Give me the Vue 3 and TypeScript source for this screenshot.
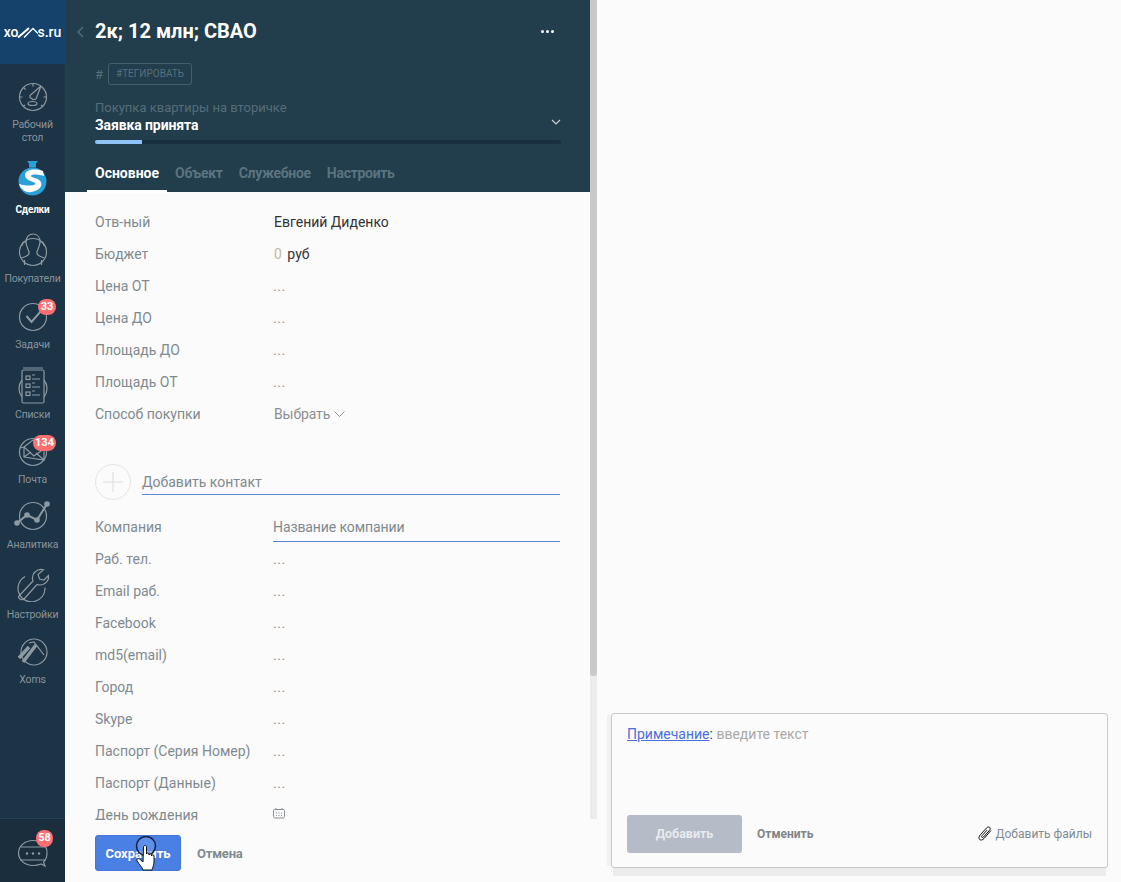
<script setup lang="ts">
const topFields = [
  { label: 'Цена ОТ', value: '...' },
  { label: 'Цена ДО', value: '...' },
  { label: 'Площадь ДО', value: '...' },
  { label: 'Площадь ОТ', value: '...' },
]
const lowerFields = ['Раб. тел.', 'Email раб.', 'Facebook', 'md5(email)', 'Город', 'Skype', 'Паспорт (Серия Номер)', 'Паспорт (Данные)']
const tabs = ['Объект', 'Служебное', 'Настроить']
</script>

<template>
  <div class="app">
    <nav class="nav">
      <div class="logo"><span>xo</span><svg class="logo-m" viewBox="0 0 21 12" width="21" height="12"><path class="m1" d="M1 11.500L12 2"/><path class="m2" d="M7 11.500L16 2.500l5 5"/></svg><span>s.ru</span></div>
      <div class="nav-items">
        <a class="item first">
          <svg viewBox="0 0 30 30" width="30" height="30" class="ico"><circle cx="15" cy="15" r="13.500"/><path d="M15 1.500v3M5.500 5.500l2 2M1.500 15h3M25.500 15h3M5 24.500l2-1.500M25 24.500l-2-1.500"/><path d="M12 13.500L23 4l-5 13-3 .5-3-2z"/><ellipse cx="14.500" cy="21.500" rx="4.500" ry="2"/></svg>
          <span class="lbl">Рабочий<br>стол</span>
        </a>
        <a class="item active">
          <svg viewBox="0 0 29 36" width="29" height="36">
            <path d="M9 0h11l-2 2.500v4h-7v-4z" fill="#2a9fd8"/>
            <circle cx="14" cy="20.500" r="14" fill="#2a9fd8" transform="translate(.5 0)"/>
            <path d="M25 10C16 7 7 9 7 14c0 5 7 6 10 8 2 2-5 4-16 1 2 6 8 9 12 8 7-1 12-5 10-10-2-4-9-4-10-6 0-2 6-2 13 0z" fill="#fff"/>
          </svg>
          <span class="lbl">Сделки</span>
        </a>
        <a class="item buyers">
          <svg viewBox="0 0 30 34" width="30" height="34" class="ico"><circle cx="15" cy="19" r="13.500"/><path d="M8 9c0-5 3-8 7-8s7 3 7 8c0 4-2 7-3 10-.5 2 1 3.500 3.500 4.500l4 1.500M8 9c0 4 2 7 3 10 .5 2-1 3.500-3.500 4.500l-4 1.500"/><path d="M8 9C5 8 4 11 4 13M22 9c3-1 4 2 4 4"/><path d="M6.500 32v-5M23.500 32v-5"/></svg>
          <span class="lbl">Покупатели</span>
        </a>
        <a class="item short tasks">
          <span class="badge b33">33</span>
          <svg viewBox="0 0 30 30" width="30" height="30" class="ico"><circle cx="15" cy="15" r="13.500"/><path class="heavy" d="M8.500 14l5 6L23 9"/></svg>
          <span class="lbl">Задачи</span>
        </a>
        <a class="item lists">
          <svg viewBox="0 0 32 38" width="32" height="38" class="ico"><path d="M5 13a13.500 13.500 0 0 0 0 17M27 13a13.500 13.500 0 0 1 0 17M6 1h20"/><rect x="5" y="3" width="22" height="33" rx="1.500"/><rect x="9" y="9" width="4" height="3.500"/><rect x="9" y="17" width="4" height="3.500"/><rect x="9" y="25" width="4" height="3.500"/><path d="M15 8h3M15 12h8M15 16h3M15 20h8M15 24h3M15 28h8"/></svg>
          <span class="lbl">Списки</span>
        </a>
        <a class="item short">
          <span class="badge b134">134</span>
          <svg viewBox="0 0 30 30" width="30" height="30" class="ico"><circle cx="15" cy="15" r="13.500"/><path d="M2 11l4-1 9-7 11 9M6 10v10l20 3V12M6 10l10 9 10-7M6 20l7-5M26 23l-8-7"/></svg>
          <span class="lbl">Почта</span>
        </a>
        <a class="item short">
          <svg viewBox="0 0 40 32" width="40" height="32" class="ico"><circle cx="20" cy="16" r="13.500"/><path class="heavy" d="M4 23l10-8 10 5 10-16"/><g class="dots"><circle cx="4" cy="23" r="2.800"/><circle cx="14" cy="15" r="2.800"/><circle cx="24" cy="20" r="2.800"/><circle cx="34" cy="4" r="2.800"/></g></svg>
          <span class="lbl">Аналитика</span>
        </a>
        <a class="item">
          <svg viewBox="0 0 34 36" width="34" height="36" class="ico"><path d="M9 10.500a13.500 13.500 0 1 0 20 11"/><path d="M3 30L17 15c-1.500-5 1-9 5-11 2-.8 4-.8 5.500-.3L22 8.500l1.500 4.500 4.500 1 4.500-4.500c.5 3-.5 5.500-3 7.500-3 2.300-6 2.300-8.500 1.500L8 33c-2 2-7-1-5-3z"/></svg>
          <span class="lbl">Настройки</span>
        </a>
        <a class="item short">
          <svg viewBox="0 0 32 30" width="32" height="30" class="ico"><circle cx="17" cy="15" r="13"/><path class="wide" d="M2 21L12 10M6 25L19 8"/><path d="M12 6l5-1 10 13"/></svg>
          <span class="lbl">Xoms</span>
        </a>
      </div>
      <div class="chat">
        <span class="badge b58">58</span>
        <svg viewBox="0 0 32 30" width="32" height="30" class="ico"><path d="M16 1.500C8 1.500 1.500 7 1.500 14c0 7 6.500 12.500 14.500 12.500 3 0 5.500-.4 8-1.500l4 2-1.500-4c2.500-2.500 3.500-5.500 3.500-9C30.500 7 24 1.500 16 1.500z"/><path d="M4 8h24M3 21h26"/><g class="dots"><circle cx="10" cy="14.500" r="1.200"/><circle cx="16" cy="14.500" r="1.200"/><circle cx="22" cy="14.500" r="1.200"/></g></svg>
      </div>
    </nav>

    <section class="panel">
      <header class="head">
        <div class="title-row">
          <svg class="back" viewBox="0 0 8 12" width="8" height="12"><path d="M7 1L2 6l5 5" fill="none" stroke="#4f6b78" stroke-width="1.500"/></svg>
          <h1>2к; 12 млн; СВАО</h1>
          <span class="more"><i></i><i></i><i></i></span>
        </div>
        <div class="tag-row"><span class="hash">#</span><span class="tag">#ТЕГИРОВАТЬ</span></div>
        <div class="pipeline">Покупка квартиры на вторичке</div>
        <div class="stage">
          <span>Заявка принята</span>
          <svg viewBox="0 0 10 6" width="10" height="6"><path d="M1 1l4 4 4-4" fill="none" stroke="#c8d2d8" stroke-width="1.200"/></svg>
        </div>
        <div class="progress"><div class="fill"></div></div>
        <div class="tabs">
          <span class="tab on">Основное</span>
          <span v-for="t in tabs" :key="t" class="tab">{{ t }}</span>
        </div>
      </header>

      <div class="scroll">
        <div class="row"><span class="k">Отв-ный</span><span class="v dark">Евгений Диденко</span></div>
        <div class="row"><span class="k">Бюджет</span><span class="v dark"><b class="zero">0</b> руб</span></div>
        <div v-for="f in topFields" :key="f.label" class="row"><span class="k">{{ f.label }}</span><span class="v dots3">{{ f.value }}</span></div>
        <div class="row">
          <span class="k">Способ покупки</span>
          <span class="v choose">Выбрать <svg viewBox="0 0 11 6" width="11" height="6"><path d="M.5.500l5 5 5-5" fill="none" stroke="#8a8f93"/></svg></span>
        </div>

        <div class="contact">
          <span class="plus"><svg viewBox="0 0 20 20" width="20" height="20"><path d="M10 0v20M0 10h20" stroke="#dcdcdc" fill="none"/></svg></span>
          <span class="contact-input">Добавить контакт</span>
        </div>
        <div class="row company"><span class="k">Компания</span><span class="v company-input">Название компании</span></div>
        <div v-for="f in lowerFields" :key="f" class="row"><span class="k">{{ f }}</span><span class="v dots3">...</span></div>
        <div class="row">
          <span class="k">День рождения</span>
          <span class="v"><svg class="cal" viewBox="0 0 12 12" width="12" height="12"><path d="M1.500 2.500h9a1 1 0 0 1 1 1v6a1.500 1.500 0 0 1-1.500 1.500H2A1.500 1.500 0 0 1 .5 9.500v-6a1 1 0 0 1 1-1zM3 1v2M9 1v2M3 6h1M5.500 6h1M8 6h1M3 8.500h1M5.500 8.500h1M8 8.500h1" fill="none" stroke="#8a8f93"/></svg></span>
        </div>
      </div>

      <footer class="foot">
        <button class="save">Сохранить</button>
        <span class="cancel">Отмена</span>
        <svg class="cursor" viewBox="0 0 26 36" width="26" height="36">
          <circle cx="12" cy="10" r="9.500" fill="#6f9cf0" fill-opacity=".55" stroke="#10233a" stroke-width="1.500"/>
          <path d="M9.500 11c0-2 3-2 3 0v7c0-1.500 2.500-1.500 2.500 0v1c0-1.500 2.500-1.500 2.500 0v1c0-1.500 2.500-1.500 2.500 0v6c0 3-1.500 6-2 8h-9c-1-3-4-6-6-9-1-2 1-3 2.500-2l3.500 3z" fill="#fff" stroke="#111" stroke-width="1"/>
        </svg>
      </footer>
    </section>

    <div class="scrollbar"><div class="thumb"></div></div>

    <aside class="side">
      <div class="note">
        <div class="note-text"><a class="link">Примечание</a>: <span class="ph">введите текст</span></div>
        <div class="note-foot">
          <button class="add">Добавить</button>
          <span class="undo">Отменить</span>
          <span class="files">
            <svg viewBox="0 0 14 16" width="14" height="16"><path d="M13 4.500L6 12.500c-1.500 1.700-3.500 2-4.500.9s-.6-3 .9-4.700L8.500 2c1-1.100 2.400-1.400 3.200-.6s.6 2.100-.4 3.200L5.500 11c-.5.600-1.200.7-1.600.3s-.3-1.100.2-1.700l5-5.500" fill="none" stroke="#111" stroke-width="1"/></svg>
            Добавить файлы
          </span>
        </div>
      </div>
    </aside>
  </div>
</template>

<style>
html, body { margin: 0; background: #fbfbfb; }
</style>

<style scoped>
.app { display: flex; height: 882px; width: 1121px; overflow: hidden; background: #fbfbfb; font-family: Roboto, "Noto Sans", sans-serif; font-size: 14px; }
.nav { width: 65px; flex: none; background: #1d3346; display: flex; flex-direction: column; }
.logo { height: 64px; background: #14426b; color: #fff; display: flex; align-items: center; justify-content: center; font-size: 14px; font-weight: 500; padding-bottom: 1px; box-sizing: border-box; }
.logo-m { margin: 1px -1px 0; fill: none; stroke: #fff; }
.m1 { stroke-width: 2; }
.m2 { stroke-width: 1.300; }
.nav-items { flex: 1; display: flex; flex-direction: column; }
.item { height: 70px; position: relative; display: flex; flex-direction: column; align-items: center; justify-content: flex-end; color: #88949c; }
.item.first { height: 80px; }
.item.active { height: 72px; color: #fff; }
.item.buyers { height: 69px; }
.item.short { height: 65px; }
.item.short.tasks { height: 66px; }
.lbl { font-size: 10.500px; letter-spacing: -.2px; line-height: 13px; text-align: center; margin-top: 6px; }
.lists .lbl { margin-top: 3px; }
.buyers .lbl { margin-top: 5px; }
.item.active .lbl { font-weight: 700; font-size: 10px; }
.ico { fill: none; stroke: #8e9aa1; stroke-width: 1.200; }
.ico .heavy { stroke-width: 2; }
.ico .wide { stroke-width: 3.500; }
.ico .dots { fill: #8e9aa1; stroke: none; }
.badge { position: absolute; background: #ff6f72; color: #fff; font-size: 11px; font-weight: 700; line-height: 16px; border-radius: 8px; text-align: center; z-index: 1; }
.b33 { top: 14px; left: 38px; width: 18px; }
.b134 { top: 14px; left: 33px; width: 23px; }
.b58 { top: 11px; left: 36px; width: 17px; height: 17px; }
.chat { height: 64px; background: #1a2e3d; border-top: 1px solid #2a4050; position: relative; display: flex; justify-content: center; align-items: center; padding-top: 6px; box-sizing: border-box; }
.panel { width: 525px; flex: none; display: flex; flex-direction: column; }
.head { height: 192px; flex: none; box-sizing: border-box; background: #223d4b; padding: 0 29px 0 30px; display: flex; flex-direction: column; }
.title-row { height: 62px; display: flex; align-items: center; position: relative; }
.back { position: absolute; left: -19px; top: 26px; }
h1 { margin: 0; font-size: 20px; font-weight: 700; color: #fff; flex: 1; }
.more { display: flex; gap: 2px; margin-right: 7px; }
.more i { width: 3px; height: 3px; background: #fff; border-radius: 50%; }
.tag-row { display: flex; align-items: center; gap: 5px; height: 22px; margin-top: 1px; }
.hash { color: #56707c; font-size: 13px; width: 8px; }
.tag { border: 1px solid #42606d; border-radius: 3px; color: #56707c; font-size: 10px; height: 20px; line-height: 20px; padding: 0 7px; }
.pipeline { color: #546e7a; font-size: 13px; margin-top: 14px; line-height: 17px; }
.stage { color: #fff; font-weight: 700; letter-spacing: -.1px; line-height: 18px; display: flex; justify-content: space-between; align-items: center; }
.stage svg { margin-bottom: 6px; }
.progress { height: 4px; background: #1a2f3e; border-radius: 2px; margin-top: 6px; }
.fill { height: 4px; width: 47px; background: #8fc3f5; border-radius: 2px 0 0 2px; }
.tabs { display: flex; gap: 16px; margin-top: 20px; }
.tab { color: #5a7480; font-weight: 700; letter-spacing: -.3px; line-height: 18px; position: relative; }
.tab.on { color: #fff; letter-spacing: 0; }
.tab.on::after { content: ""; position: absolute; left: -8px; right: -8px; top: 26px; height: 3px; background: #fff; }
.scroll { height: 628px; overflow: hidden; padding: 14px 30px 0; box-sizing: border-box; flex: none; }
.row { display: flex; height: 32px; align-items: center; }
.k { width: 179px; flex: none; color: #7f8a90; }
.v { color: #8a8f93; }
.v.dark { color: #333; }
.dots3 { letter-spacing: .6px; margin-left: -1px; }
.zero { font-weight: 400; color: #c8b6a6; margin-right: 2px; }
.choose { display: flex; align-items: center; gap: 4px; letter-spacing: -.1px; }
.contact { display: flex; align-items: center; margin-top: 34px; height: 36px; gap: 11px; }
.plus { width: 34px; height: 34px; border: 1px solid #e4e4e4; border-radius: 50%; display: flex; align-items: center; justify-content: center; flex: none; }
.contact-input { flex: 1; color: #7f8a90; line-height: 24px; border-bottom: 1px solid #5b84d6; }
.company { margin-top: 11px; }
.company-input { flex: 1; color: #7f8a90; line-height: 28px; border-bottom: 1px solid #5b84d6; margin-left: -1px; letter-spacing: -.1px; }
.cal { display: block; margin-top: -5px; margin-left: -1px; }
.foot { height: 62px; flex: none; box-sizing: border-box; display: flex; align-items: center; padding: 4px 30px 0; position: relative; gap: 16px; }
.save { width: 86px; height: 36px; background: #4a80e4; border: 1px solid #4376d6; border-radius: 3px; color: #fff; font: 700 13px Roboto, sans-serif; padding: 0; }
.cancel { color: #808a90; font-weight: 700; font-size: 13px; letter-spacing: -.2px; }
.cursor { position: absolute; left: 69px; top: 16px; }
.scrollbar { width: 7px; height: 819px; flex: none; background: #ececec; }
.thumb { height: 676px; background: #c9c9c9; border-radius: 0 0 3px 3px; }
.side { flex: 1; display: flex; flex-direction: column; justify-content: flex-end; padding: 0 13px 14px 14px; }
.note { height: 155px; box-sizing: border-box; border: 1px solid #c8c8c8; border-radius: 3px; background: #fbfbfb; box-shadow: -6px 0 0 -2px #f1f1f1, 0 10px 0 -2px #ececec; padding: 11px 15px 14px; display: flex; flex-direction: column; justify-content: space-between; }
.note-text { line-height: 18px; color: #333; }
.link { color: #4a6ee0; text-decoration: underline; }
.ph { color: #a8a8a8; }
.note-foot { display: flex; align-items: center; }
.add { width: 115px; height: 38px; background: #b5bbc7; border: 0; border-radius: 3px; color: #e8eaee; font: 700 12.500px Roboto, sans-serif; padding: 0 0 2px; }
.undo { margin-left: 15px; color: #808488; font-weight: 700; font-size: 12px; flex: 1; }
.files { display: flex; align-items: center; gap: 4px; color: #7f8a90; font-size: 12px; }
</style>
